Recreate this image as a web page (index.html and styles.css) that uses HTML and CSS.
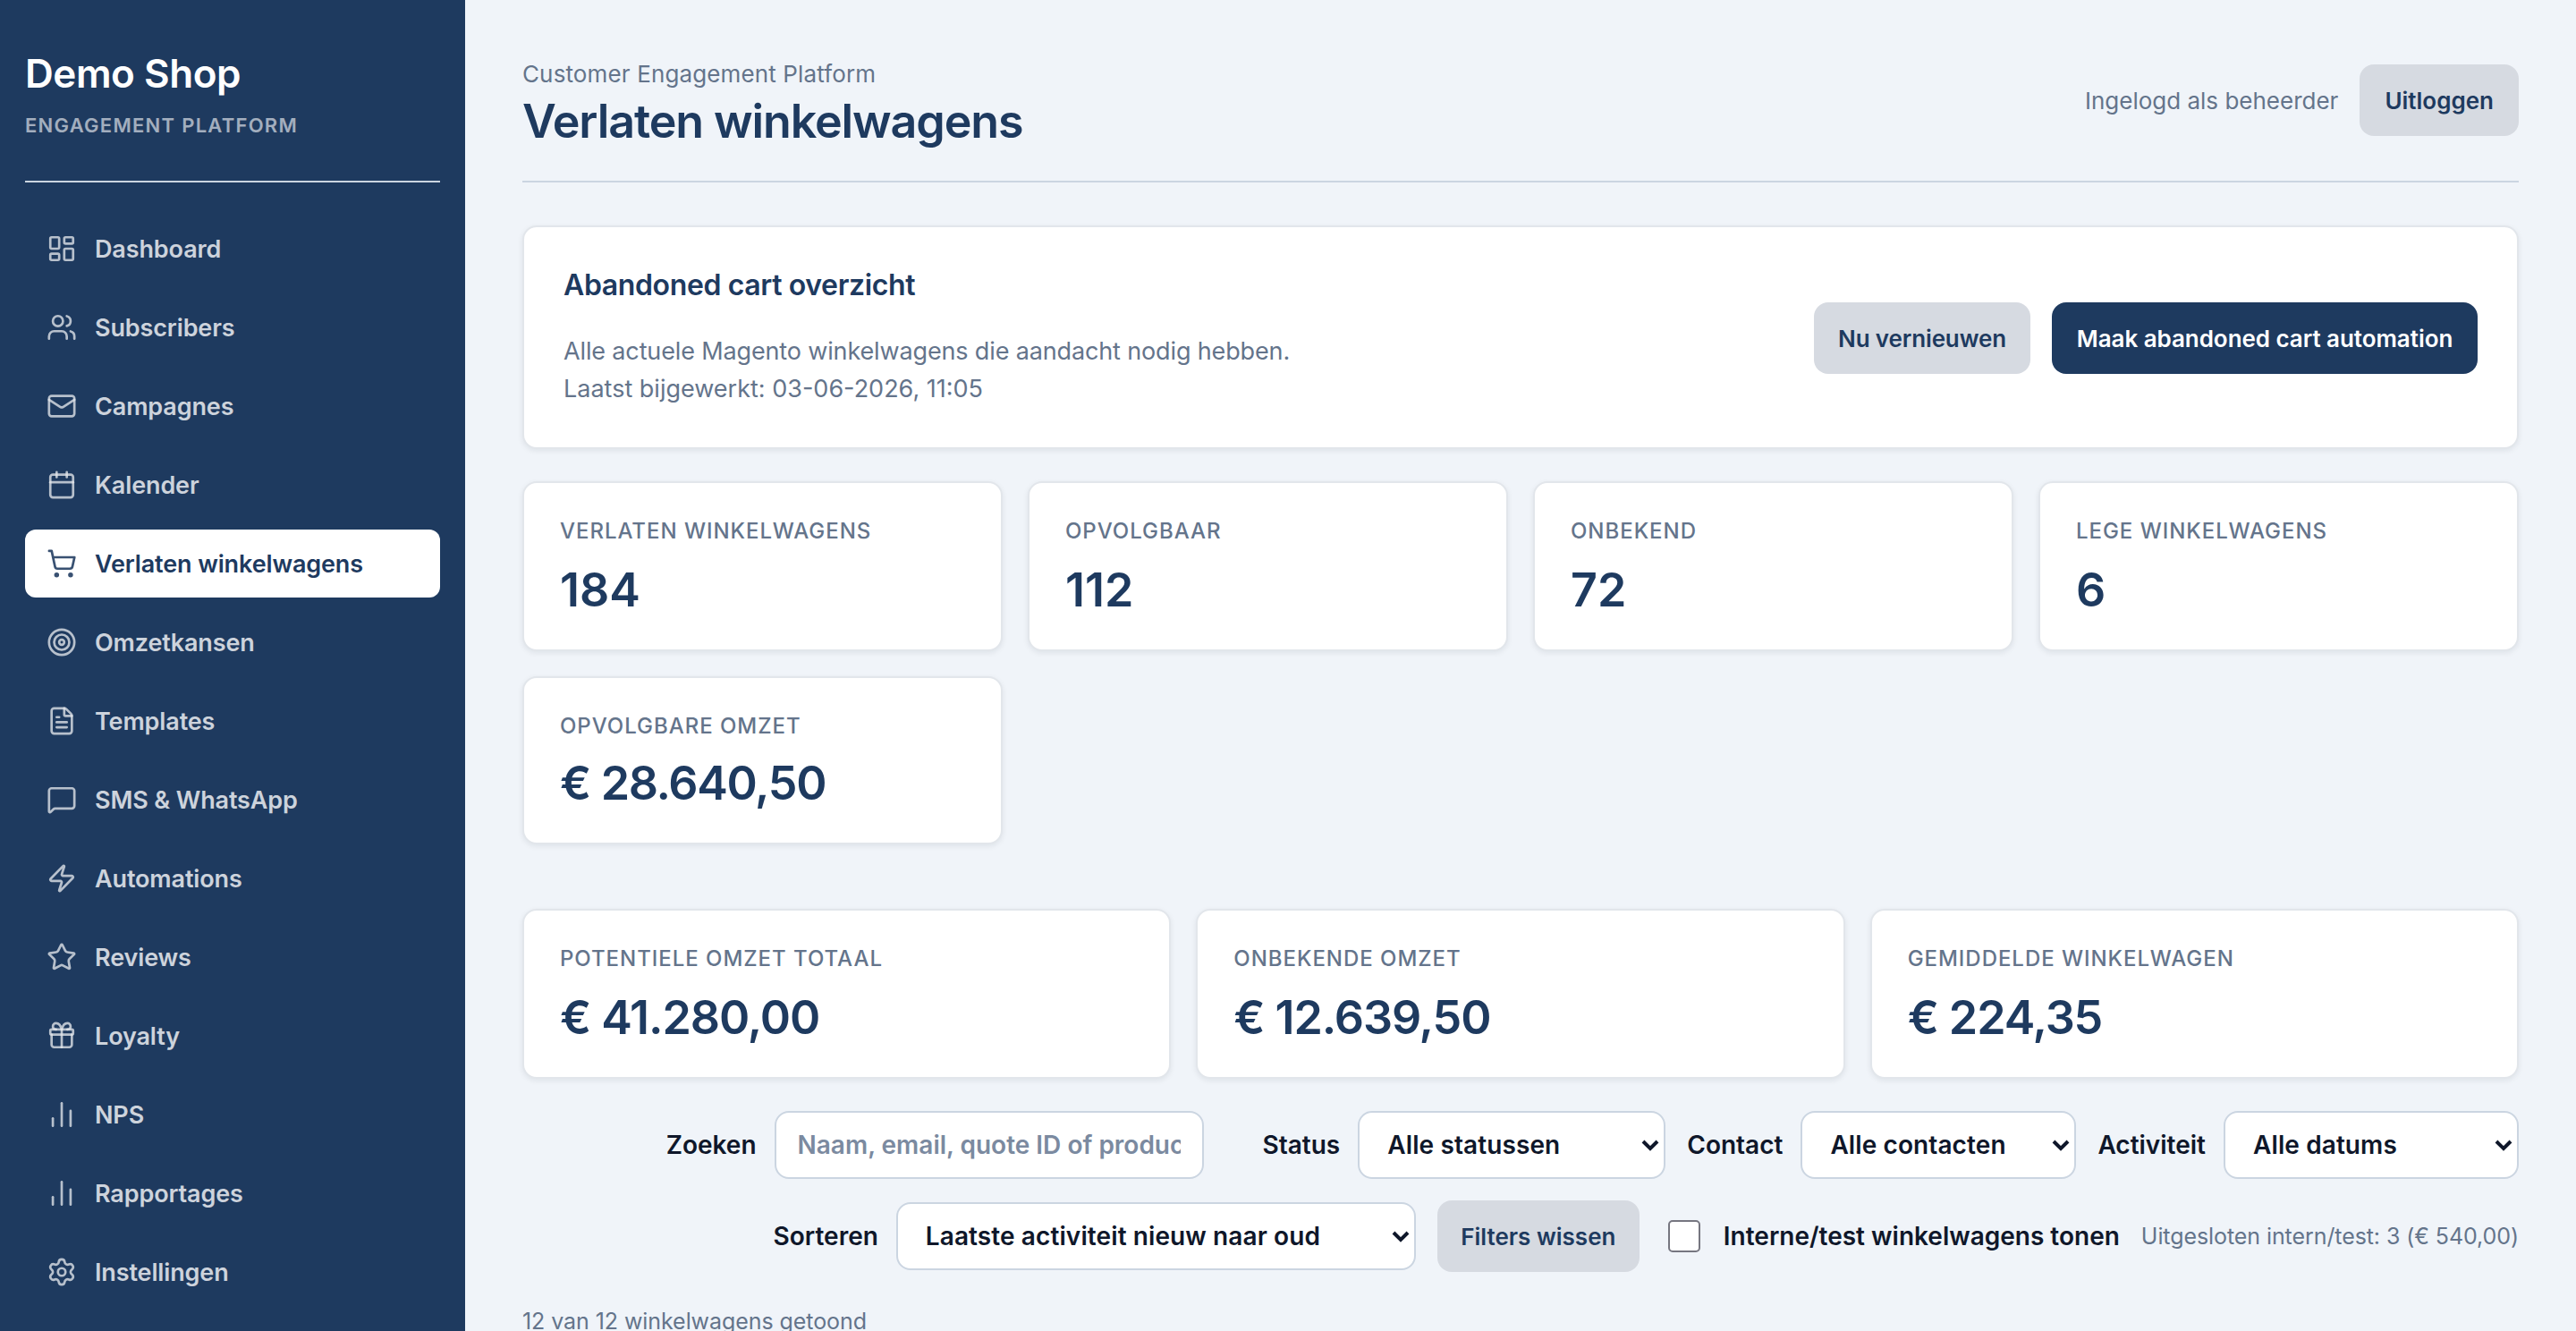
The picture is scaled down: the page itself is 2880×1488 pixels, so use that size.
FILE: index.html
```html
<!DOCTYPE html>
<html lang="nl">
<head>
<meta charset="utf-8">
<title>Verlaten winkelwagens</title>
<link rel="stylesheet" href="styles.css">
</head>
<body>
<div class="app">
  <aside class="sidebar">
    <div class="brand">
      <div class="brand-name">Demo Shop</div>
      <div class="brand-sub">Engagement Platform</div>
    </div>
    <nav class="nav">
      <a class="nav-item"><svg class="icon" viewBox="0 0 24 24"><rect x="3" y="3" width="7" height="9" rx="1"/><rect x="14" y="3" width="7" height="5" rx="1"/><rect x="14" y="12" width="7" height="9" rx="1"/><rect x="3" y="16" width="7" height="5" rx="1"/></svg><span>Dashboard</span></a>
      <a class="nav-item"><svg class="icon" viewBox="0 0 24 24"><path d="M16 21v-2a4 4 0 0 0-4-4H6a4 4 0 0 0-4 4v2"/><path d="M16 3.128a4 4 0 0 1 0 7.744"/><path d="M22 21v-2a4 4 0 0 0-3-3.87"/><circle cx="9" cy="7" r="4"/></svg><span>Subscribers</span></a>
      <a class="nav-item"><svg class="icon" viewBox="0 0 24 24"><path d="m22 7-8.991 5.727a2 2 0 0 1-2.009 0L2 7"/><rect x="2" y="4" width="20" height="16" rx="2"/></svg><span>Campagnes</span></a>
      <a class="nav-item"><svg class="icon" viewBox="0 0 24 24"><path d="M8 2v4"/><path d="M16 2v4"/><rect x="3" y="4" width="18" height="18" rx="2"/><path d="M3 10h18"/></svg><span>Kalender</span></a>
      <a class="nav-item nav-item-active"><svg class="icon" viewBox="0 0 24 24"><circle cx="8" cy="21" r="1"/><circle cx="19" cy="21" r="1"/><path d="M2.05 2.05h2l2.66 12.42a2 2 0 0 0 2 1.58h9.78a2 2 0 0 0 1.95-1.57l1.65-7.43H5.12"/></svg><span>Verlaten winkelwagens</span></a>
      <a class="nav-item"><svg class="icon" viewBox="0 0 24 24"><circle cx="12" cy="12" r="10"/><circle cx="12" cy="12" r="6"/><circle cx="12" cy="12" r="2"/></svg><span>Omzetkansen</span></a>
      <a class="nav-item"><svg class="icon" viewBox="0 0 24 24"><path d="M6 22a2 2 0 0 1-2-2V4a2 2 0 0 1 2-2h8a2.4 2.4 0 0 1 1.704.706l3.588 3.588A2.4 2.4 0 0 1 20 8v12a2 2 0 0 1-2 2z"/><path d="M14 2v5a1 1 0 0 0 1 1h5"/><path d="M10 9H8"/><path d="M16 13H8"/><path d="M16 17H8"/></svg><span>Templates</span></a>
      <a class="nav-item"><svg class="icon" viewBox="0 0 24 24"><path d="M22 17a2 2 0 0 1-2 2H6.828a2 2 0 0 0-1.414.586l-2.202 2.202A.71.71 0 0 1 2 21.286V5a2 2 0 0 1 2-2h16a2 2 0 0 1 2 2z"/></svg><span>SMS &amp; WhatsApp</span></a>
      <a class="nav-item"><svg class="icon" viewBox="0 0 24 24"><path d="M4 14a1 1 0 0 1-.78-1.63l9.9-10.2a.5.5 0 0 1 .86.46l-1.92 6.02A1 1 0 0 0 13 10h7a1 1 0 0 1 .78 1.63l-9.9 10.2a.5.5 0 0 1-.86-.46l1.92-6.02A1 1 0 0 0 11 14z"/></svg><span>Automations</span></a>
      <a class="nav-item"><svg class="icon" viewBox="0 0 24 24"><path d="M11.525 2.295a.53.53 0 0 1 .95 0l2.31 4.679a2.123 2.123 0 0 0 1.595 1.16l5.166.756a.53.53 0 0 1 .294.904l-3.736 3.638a2.123 2.123 0 0 0-.611 1.878l.882 5.14a.53.53 0 0 1-.771.56l-4.618-2.428a2.122 2.122 0 0 0-1.973 0L6.396 21.01a.53.53 0 0 1-.77-.56l.881-5.139a2.122 2.122 0 0 0-.611-1.879L2.16 9.795a.53.53 0 0 1 .294-.906l5.165-.755a2.122 2.122 0 0 0 1.597-1.16z"/></svg><span>Reviews</span></a>
      <a class="nav-item"><svg class="icon" viewBox="0 0 24 24"><path d="M12 7v14"/><path d="M20 11v8a2 2 0 0 1-2 2H6a2 2 0 0 1-2-2v-8"/><path d="M7.5 7a1 1 0 0 1 0-5A4.8 8 0 0 1 12 7a4.8 8 0 0 1 4.5-5 1 1 0 0 1 0 5"/><rect x="3" y="7" width="18" height="4" rx="1"/></svg><span>Loyalty</span></a>
      <a class="nav-item"><svg class="icon" viewBox="0 0 24 24"><path d="M5 21v-6"/><path d="M12 21V3"/><path d="M19 21V9"/></svg><span>NPS</span></a>
      <a class="nav-item"><svg class="icon" viewBox="0 0 24 24"><path d="M5 21v-6"/><path d="M12 21V3"/><path d="M19 21V9"/></svg><span>Rapportages</span></a>
      <a class="nav-item"><svg class="icon" viewBox="0 0 24 24"><path d="M9.671 4.136a2.34 2.34 0 0 1 4.659 0 2.34 2.34 0 0 0 3.319 1.915 2.34 2.34 0 0 1 2.33 4.033 2.34 2.34 0 0 0 0 3.831 2.34 2.34 0 0 1-2.33 4.033 2.34 2.34 0 0 0-3.319 1.915 2.34 2.34 0 0 1-4.659 0 2.34 2.34 0 0 0-3.32-1.915 2.34 2.34 0 0 1-2.33-4.033 2.34 2.34 0 0 0 0-3.831A2.34 2.34 0 0 1 6.35 6.051a2.34 2.34 0 0 0 3.319-1.915"/><circle cx="12" cy="12" r="3"/></svg><span>Instellingen</span></a>
    </nav>
  </aside>

  <main class="main">
    <header class="header">
      <div class="header-titles">
        <div class="eyebrow">Customer Engagement Platform</div>
        <h1 class="title">Verlaten winkelwagens</h1>
      </div>
      <div class="header-user">
        <span class="user-role">Ingelogd als beheerder</span>
        <button class="btn">Uitloggen</button>
      </div>
    </header>

    <section class="card overview">
      <div>
        <h2 class="overview-title">Abandoned cart overzicht</h2>
        <p class="overview-text"><span class="overview-lead">Alle actuele Magento winkelwagens die aandacht nodig hebben.</span><br>Laatst bijgewerkt: 03-06-2026, 11:05</p>
      </div>
      <div class="overview-actions">
        <button class="btn btn-refresh">Nu vernieuwen</button>
        <button class="btn btn-primary">Maak abandoned cart automation</button>
      </div>
    </section>

    <section class="stats stats-four">
      <div class="card stat"><div class="stat-label">Verlaten winkelwagens</div><div class="stat-value">184</div></div>
      <div class="card stat"><div class="stat-label">Opvolgbaar</div><div class="stat-value">112</div></div>
      <div class="card stat"><div class="stat-label">Onbekend</div><div class="stat-value">72</div></div>
      <div class="card stat"><div class="stat-label">Lege winkelwagens</div><div class="stat-value">6</div></div>
      <div class="card stat stat-compact"><div class="stat-label">Opvolgbare omzet</div><div class="stat-value">€ 28.640,50</div></div>
    </section>

    <section class="stats stats-three">
      <div class="card stat"><div class="stat-label">Potentiele omzet totaal</div><div class="stat-value">€ 41.280,00</div></div>
      <div class="card stat"><div class="stat-label">Onbekende omzet</div><div class="stat-value">€ 12.639,50</div></div>
      <div class="card stat"><div class="stat-label">Gemiddelde winkelwagen</div><div class="stat-value">€ 224,35</div></div>
    </section>

    <section class="filters">
      <div class="filter-row">
        <label class="field field-search">Zoeken <input class="control search" type="text" placeholder="Naam, email, quote ID of product"></label>
        <label class="field">Status <span class="select"><select class="control control-status"><option>Alle statussen</option></select><svg class="chevron" viewBox="0 0 20 14"><path d="M2 2l8 8 8-8"/></svg></span></label>
        <label class="field">Contact <span class="select"><select class="control control-contact"><option>Alle contacten</option></select><svg class="chevron" viewBox="0 0 20 14"><path d="M2 2l8 8 8-8"/></svg></span></label>
        <label class="field">Activiteit <span class="select"><select class="control control-date"><option>Alle datums</option></select><svg class="chevron" viewBox="0 0 20 14"><path d="M2 2l8 8 8-8"/></svg></span></label>
      </div>
      <div class="filter-row">
        <label class="field">Sorteren <span class="select"><select class="control control-sort"><option>Laatste activiteit nieuw naar oud</option></select><svg class="chevron" viewBox="0 0 20 14"><path d="M2 2l8 8 8-8"/></svg></span></label>
        <button class="btn btn-clear">Filters wissen</button>
        <label class="field field-check"><input class="checkbox" type="checkbox">Interne/test winkelwagens tonen</label>
        <span class="filter-note">Uitgesloten intern/test: 3 (€ 540,00)</span>
      </div>
    </section>

    <p class="result-count">12 van 12 winkelwagens getoond</p>
  </main>
</div>
</body>
</html>
```
FILE: styles.css
```css
* { box-sizing: border-box; }

body {
  margin: 0;
  height: 1488px;
  overflow: hidden;
  background: #f0f4f9;
  color: #0f172a;
  font-family: Inter, "Liberation Sans", sans-serif;
  font-size: 28px;
}

h1, h2, p { margin: 0; }

.app { display: flex; height: 1488px; overflow: hidden; }

/* Sidebar */
.sidebar {
  flex: none;
  width: 520px;
  padding: 56px 28px 0;
  background: #1e3a5f;
}
.brand { padding-bottom: 48px; border-bottom: 2px solid #cbd5e1; }
.brand-name {
  color: #fff;
  font-size: 44px;
  font-weight: 600;
  line-height: 52px;
  letter-spacing: -0.01em;
}
.brand-sub {
  margin-top: 18px;
  color: rgba(255, 255, 255, .6);
  font-size: 22px;
  font-weight: 600;
  line-height: 28px;
  letter-spacing: 1.27px;
  text-transform: uppercase;
}
.nav { display: flex; flex-direction: column; gap: 12px; margin-top: 36px; }
.nav-item {
  display: flex;
  align-items: center;
  gap: 20px;
  height: 76px;
  padding: 0 24px;
  border-radius: 12px;
  color: rgba(255, 255, 255, .78);
  font-size: 27px;
  font-weight: 600;
  letter-spacing: -.13px;
}
.nav-item-active { background: #fff; color: #1e3a5f; }
.icon {
  flex: none;
  width: 34px;
  height: 34px;
  fill: none;
  stroke: currentColor;
  stroke-width: 1.9;
  stroke-linecap: round;
  stroke-linejoin: round;
  opacity: .88;
}

/* Main column */
.main { flex: 1; min-width: 0; padding: 56px 64px 0; }
.header {
  display: flex;
  align-items: center;
  justify-content: space-between;
  height: 148px;
  padding-bottom: 34px;
  border-bottom: 2px solid #cbd5e1;
}
.header-titles { padding-bottom: 4px; }
.eyebrow {
  color: #64748b;
  font-size: 26px;
  line-height: 52px;
  letter-spacing: .13px;
}
.title {
  color: #1e3a5f;
  font-size: 52px;
  font-weight: 600;
  line-height: 54px;
  letter-spacing: -1.12px;
}
.header-user { display: flex; align-items: center; gap: 24px; }
.user-role { color: #64748b; font-size: 26px; }

.btn {
  height: 80px;
  padding: 0 28px;
  border: 0;
  border-radius: 16px;
  background: #d6dae1;
  color: #1e3a5f;
  font: 600 26px Inter, "Liberation Sans", sans-serif;
  white-space: nowrap;
}
.btn-refresh { width: 242px; padding: 0; letter-spacing: -.13px; }
.btn-clear { width: 226px; padding: 0; }
.btn-primary {
  width: 476px;
  padding: 0;
  background: #1e3a5f;
  color: #fff;
  letter-spacing: -.05px;
}

.card {
  border: 2px solid #e2e6eb;
  border-radius: 16px;
  background: #fff;
  box-shadow: 0 2px 6px rgba(15, 23, 42, .08);
}

.overview {
  display: flex;
  justify-content: space-between;
  align-items: center;
  height: 250px;
  margin-top: 48px;
  padding: 0 44px;
}
.overview-title {
  color: #1e3a5f;
  font-size: 32px;
  font-weight: 600;
  line-height: 42px;
  letter-spacing: -.38px;
}
.overview-text {
  margin-top: 32px;
  color: #64748b;
  font-size: 27px;
  line-height: 42px;
}
.overview-lead { letter-spacing: -.14px; }
.overview-actions { display: flex; gap: 24px; padding-top: 2px; }

/* Figures */
.stats { display: grid; gap: 28px; }
.stats-four { grid-template-columns: repeat(4, 1fr); margin-top: 36px; }
.stats-three { grid-template-columns: repeat(3, 1fr); margin-top: 72px; }
.stat { height: 190px; padding: 39px 40px 0; }
.stat-label {
  color: #64748b;
  font-size: 24px;
  font-weight: 500;
  line-height: 30px;
  letter-spacing: .04em;
  text-transform: uppercase;
}
.stat-value {
  margin-top: 20px;
  color: #1e3a5f;
  font-size: 52px;
  font-weight: 600;
  line-height: 62px;
}
.stats-three .stat-value { letter-spacing: -1.1px; }
.stat-compact { height: 188px; }
.stat-compact .stat-value { margin-top: 18px; letter-spacing: -1.35px; }

/* Filters */
.filters { display: flex; flex-direction: column; gap: 24px; margin-top: 36px; }
.filter-row { display: flex; justify-content: flex-end; align-items: center; gap: 24px; }
.field {
  display: flex;
  align-items: center;
  gap: 20px;
  font-weight: 600;
  white-space: nowrap;
}
.field-search { margin-right: 42px; }
.field-check { gap: 26px; margin-left: 8px; }
.control {
  display: block;
  height: 76px;
  margin: 0;
  padding: 0 31px;
  border: 2px solid #cbd5e1;
  border-radius: 16px;
  background: #fff;
  color: #0f172a;
  font: 600 28px Inter, "Liberation Sans", sans-serif;
  letter-spacing: .1px;
  appearance: none;
}
.search { width: 480px; padding: 0 24px; letter-spacing: 0; }
.search::placeholder { color: #7b8aa0; opacity: 1; }
.control-status { width: 344px; }
.control-contact { width: 308px; }
.control-date { width: 330px; }
.control-sort { width: 581px; }
.select { position: relative; display: block; }
.chevron {
  position: absolute;
  top: 32px;
  right: 7px;
  width: 20px;
  height: 14px;
  fill: none;
  stroke: #0f172a;
  stroke-width: 4;
  pointer-events: none;
}
.checkbox {
  width: 36px;
  height: 36px;
  margin: 0;
  border: 2px solid #767680;
  border-radius: 5px;
  background: #fff;
  appearance: none;
}
.filter-note {
  color: #64748b;
  font-size: 25px;
  letter-spacing: -.08px;
  white-space: nowrap;
}

.result-count {
  margin-top: 37px;
  color: #64748b;
  font-size: 25px;
  line-height: 36px;
  letter-spacing: -.07px;
}
```
